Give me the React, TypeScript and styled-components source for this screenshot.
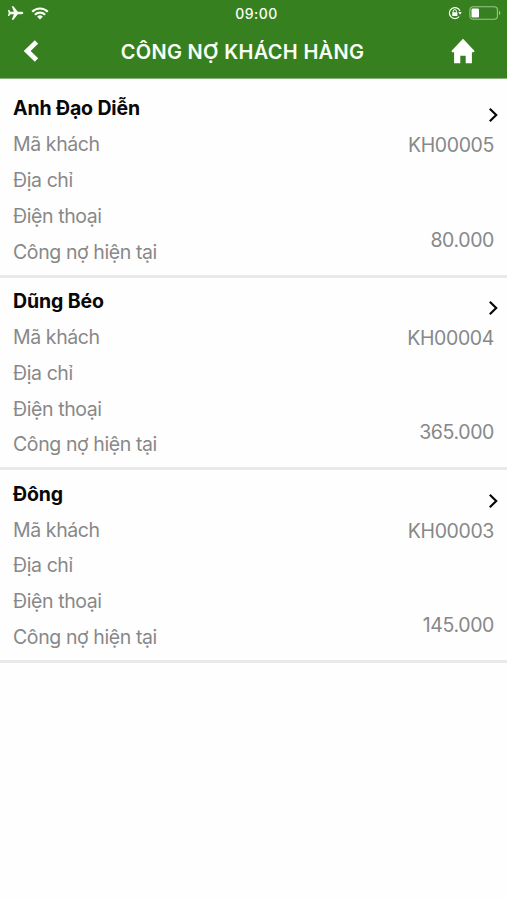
import React from "react";
import styled, { createGlobalStyle } from "styled-components";

const GlobalStyle = createGlobalStyle`
  * { box-sizing: border-box; }
  body {
    margin: 0;
    background: #fff;
    font-family: Inter, "Noto Sans", sans-serif;
  }
  svg { display: block; }
`;

const Screen = styled.div`
  width: 507px;
  height: 900px;
  overflow: hidden;
  background: #fefefe;
`;

const Header = styled.header`
  height: 79px;
  background: #378020;
  border-bottom: 1px solid #87b27a;
  color: #f8fff4;
`;

const StatusBar = styled.div`
  display: grid;
  grid-template-columns: 1fr auto 1fr;
  align-items: center;
  height: 26px;
  padding: 0 6px 0 7px;
`;

const StatusIcons = styled.div<{ $end?: boolean }>`
  display: flex;
  align-items: center;
  gap: 7px;
  justify-content: ${(p) => (p.$end ? "flex-end" : "flex-start")};
`;

const Clock = styled.time`
  font-size: 14px;
  font-weight: 550;
  line-height: 16px;
  letter-spacing: 0.45px;
  padding: 1px 0 0 5px;
`;

const TitleBar = styled.div`
  display: grid;
  grid-template-columns: 28px 1fr 28px;
  align-items: center;
  height: 50px;
  padding: 0 30px 0 18px;
`;

const Title = styled.h1`
  margin: 0 10px 0 0;
  padding-top: 1px;
  text-align: center;
  font-size: 20px;
  font-weight: 640;
  line-height: 24px;
  letter-spacing: 0.3px;
  white-space: nowrap;
`;

const IconButton = styled.button`
  display: flex;
  align-items: center;
  justify-content: center;
  width: 28px;
  height: 30px;
  padding: 0;
  border: 0;
  background: none;
  color: inherit;
`;

const List = styled.ul`
  margin: 0;
  padding: 0;
  list-style: none;
`;

const Card = styled.li`
  display: flex;
  justify-content: space-between;
  height: 192.7px;
  padding: 6.3px 13px 0;
  border-bottom: 3px solid #e9e9e9;
  &:first-child { height: 198.7px; padding-top: 12.2px; }
`;

const Labels = styled.div`
  display: flex;
  flex-direction: column;
`;

const Name = styled.h2`
  margin: 0;
  font-size: 19.5px;
  font-weight: 650;
  line-height: 35.85px;
  letter-spacing: -0.13px;
  color: #080808;
`;

const Label = styled.span`
  font-size: 19.5px;
  line-height: 35.85px;
  letter-spacing: -0.4px;
  color: #888;
`;

const Values = styled.div`
  display: flex;
  flex-direction: column;
  align-items: flex-end;
`;

const Value = styled.span`
  font-size: 19.5px;
  line-height: 30px;
  letter-spacing: -0.38px;
  color: #888;
`;

const customers = [
  { name: "Anh Đạo Diễn", code: "KH00005", debt: "80.000" },
  { name: "Dũng Béo", code: "KH00004", debt: "365.000" },
  { name: "Đông", code: "KH00003", debt: "145.000" },
];

const Chevron = styled.svg`
  margin: 16.1px -4px 6.8px 0;
`;

const Debt = styled(Value)`
  margin-top: 64.5px;
`;

const AirplaneIcon = () => (
  <svg width="17" height="14" viewBox="0 0 17 14" fill="currentColor">
    <path d="M16.3 7c0-.8-.8-1.2-1.7-1.2h-3.8L6.5.3H4.7l2.2 5.5H3.5L2.1 4.1H.9L1.7 7 .9 9.9h1.2l1.4-1.7h3.4l-2.2 5.5h1.8l4.3-5.5h3.8c.9 0 1.7-.4 1.7-1.2z" />
  </svg>
);

const WifiIcon = () => (
  <svg width="18" height="13" viewBox="0 0 18 13" fill="none" stroke="currentColor" strokeWidth="2.1">
    <path d="M1.2 4.8a11 11 0 0 1 15.6 0M3.9 7.7a7.2 7.2 0 0 1 10.2 0" />
    <path d="M9 12.6 6.1 9.8a4.1 4.1 0 0 1 5.8 0z" fill="currentColor" stroke="none" />
  </svg>
);

const RotationLockIcon = () => (
  <svg width="14" height="14" viewBox="0 0 14 14" fill="none" stroke="currentColor">
    <path d="M11.2 10.5A5.5 5.5 0 1 1 12 5" strokeWidth="1.2" />
    <path d="M10.3 6h3.5L12 8.8z" fill="currentColor" stroke="none" />
    <path d="M5.2 6.7V5.2a1.6 1.6 0 0 1 3.2 0v1.5" strokeWidth="1" />
    <rect x="4.2" y="6.3" width="5.2" height="3.6" rx=".5" fill="currentColor" stroke="none" />
  </svg>
);

const BatteryIcon = () => (
  <svg width="32" height="14" viewBox="0 0 32 14">
    <rect x=".9" y=".8" width="27.5" height="12.4" rx="3.2" fill="none" stroke="#9cc48d" strokeWidth="1.1" />
    <rect x="2.5" y="2.4" width="7.5" height="9.2" rx="1.4" fill="#fff" />
    <path d="M30 4.8c1.7.6 1.7 3.8 0 4.4z" fill="#9cc48d" />
  </svg>
);

const App = () => (
  <Screen>
    <GlobalStyle />
    <Header>
      <StatusBar>
        <StatusIcons>
          <AirplaneIcon />
          <WifiIcon />
        </StatusIcons>
        <Clock>09:00</Clock>
        <StatusIcons $end>
          <RotationLockIcon />
          <BatteryIcon />
        </StatusIcons>
      </StatusBar>
      <TitleBar>
        <IconButton aria-label="Quay lại">
          <svg width="18" height="24" viewBox="0 0 18 24" fill="none" stroke="#fff" strokeWidth="4.8">
            <path d="M13.5 3 4.2 12l9.3 9" />
          </svg>
        </IconButton>
        <Title>CÔNG NỢ KHÁCH HÀNG</Title>
        <IconButton aria-label="Trang chủ">
          <svg width="24" height="26" viewBox="0 0 24 26" fill="#fff">
            <path d="M12 .8 23.6 13l-.8 1.2h-1.9v11.1h-6.2v-7.5H9.3v7.5H3.1V14.2H1.2L.4 13z" />
          </svg>
        </IconButton>
      </TitleBar>
    </Header>
    <List>
      {customers.map((c) => (
        <Card key={c.code}>
          <Labels>
            <Name>{c.name}</Name>
            <Label>Mã khách</Label>
            <Label>Địa chỉ</Label>
            <Label>Điện thoại</Label>
            <Label>Công nợ hiện tại</Label>
          </Labels>
          <Values>
            <Chevron width="10" height="16" viewBox="0 0 10 16" fill="none" stroke="#080808" strokeWidth="2.2">
              <path d="M1.8 1.8 8.2 8 1.8 14.2" />
            </Chevron>
            <Value>{c.code}</Value>
            <Debt>{c.debt}</Debt>
          </Values>
        </Card>
      ))}
    </List>
  </Screen>
);

export default App;
